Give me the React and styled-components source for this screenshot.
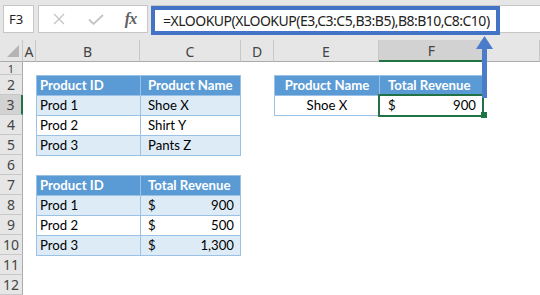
import React from 'react';
import styled, { createGlobalStyle } from 'styled-components';

const Global = createGlobalStyle`
  html, body { margin: 0; padding: 0; background: #fff; }
  body { width: 540px; height: 295px; overflow: hidden; font-family: Lato, "Liberation Sans", sans-serif; }
  * { box-sizing: border-box; }
`;

const Page = styled.div`
  position: relative;
  width: 540px;
  height: 295px;
  overflow: hidden;
  background: #fff;
`;

const TopBar = styled.div`
  height: 40px;
  background: #e6e6e6;
  display: flex;
  align-items: flex-start;
  padding: 5px 0 0 3px;
`;

const NameBox = styled.div`
  width: 31px;
  height: 28px;
  background: #fff;
  border: 1px solid #c6c6c6;
  font: 13px "Noto Sans", sans-serif;
  color: #222;
  display: flex;
  align-items: center;
  padding-left: 5px;
`;

const IconBox = styled.div`
  margin-left: 4px;
  width: 110px;
  height: 28px;
  background: #fff;
  border: 1px solid #c6c6c6;
  display: flex;
  align-items: center;
`;

const IconSlot = styled.div`
  width: ${(p) => p.$w}px;
  height: 100%;
  display: flex;
  align-items: center;
  justify-content: center;
`;

const Fx = styled.span`
  font: italic bold 16px "Liberation Serif", serif;
  color: #606060;
  letter-spacing: -1px;
`;

const FormulaField = styled.div`
  margin-left: 3px;
  flex: 1;
  height: 28px;
  background: #fff;
  border-top: 1px solid #c6c6c6;
  border-bottom: 1px solid #c6c6c6;
`;

const FormulaHighlight = styled.div`
  width: 349px;
  height: 29px;
  border: 4px solid #4472c4;
  display: flex;
  align-items: center;
  padding-left: 8px;
  font: 14px "Noto Sans", sans-serif;
  letter-spacing: -0.5px;
  color: #222;
  white-space: nowrap;
`;

const Sheet = styled.div`
  display: grid;
  grid-template-columns: 23px 13px 104px 101px 33px 105px 106px 1fr;
  grid-template-rows: 22px 13px repeat(11, 20px);
`;

const Corner = styled.div`
  background: #e6e6e6;
  border-right: 1px solid #c8c8c8;
  border-bottom: 1px solid #ababab;
  display: flex;
  align-items: flex-end;
  justify-content: flex-end;
  padding: 0 3px 4px 0;
`;

const ColHead = styled.div`
  background: ${(p) => (p.$active ? '#d2d2d2' : '#e6e6e6')};
  border-right: 1px solid #c8c8c8;
  border-bottom: ${(p) => (p.$active ? '2px solid #217346' : '1px solid #ababab')};
  display: flex;
  align-items: center;
  justify-content: center;
  font: 14px "Noto Sans", sans-serif;
  color: #444;
  padding-top: 1px;
`;

const RowHead = styled.div`
  grid-column: 1;
  grid-row: ${(p) => p.$row};
  background: ${(p) => (p.$active ? '#d2d2d2' : '#e6e6e6')};
  border-right: ${(p) => (p.$active ? '2px solid #217346' : '1px solid #ababab')};
  border-bottom: 1px solid #c8c8c8;
  display: flex;
  align-items: center;
  justify-content: center;
  font-family: "Noto Sans", sans-serif;
  font-size: ${(p) => (p.$short ? '11px' : '14px')};
  line-height: ${(p) => (p.$short ? '11px' : '18px')};
  color: #444;
`;

const Table = styled.div`
  grid-column: ${(p) => p.$col};
  grid-row: ${(p) => p.$row};
  align-self: start;
  justify-self: start;
  display: grid;
  grid-template-columns: ${(p) => p.$cols};
  grid-auto-rows: 19px;
  gap: 1px;
  padding: 1px;
  background: #9bc2e6;
  position: relative;
  z-index: 1;
`;

const bg = { head: '#5b9bd5', band: '#ddebf7', plain: '#ffffff' };

const Cell = styled.div`
  position: relative;
  background: ${(p) => bg[p.$v]};
  color: ${(p) => (p.$v === 'head' ? '#fff' : '#000')};
  font-weight: ${(p) => (p.$v === 'head' ? 700 : 400)};
  font-size: 13.2px;
  line-height: 19px;
  white-space: nowrap;
  display: flex;
  align-items: center;
  justify-content: ${(p) => p.$justify || 'flex-start'};
  padding: 0 ${(p) => p.$pr ?? 0}px 0 ${(p) => p.$pl ?? 0}px;
`;

const Selection = styled.div`
  position: absolute;
  inset: -2px;
  border: 2px solid #217346;
  pointer-events: none;
`;

const FillHandle = styled.div`
  position: absolute;
  right: -5px;
  bottom: -3px;
  width: 6px;
  height: 6px;
  background: #217346;
`;

const Arrow = styled.svg`
  position: absolute;
  left: 474px;
  top: 35px;
  z-index: 3;
`;

const cols = ['A', 'B', 'C', 'D', 'E', 'F', ''];
const rows = Array.from({ length: 12 }, (_, i) => i + 1);

const Money = ({ v, amount, pl = 7, pr = 6, children }) => (
  <Cell $v={v} $justify="space-between" $pl={pl} $pr={pr}>
    <span>$</span>
    <span>{amount}</span>
    {children}
  </Cell>
);

export default function App() {
  return (
    <Page>
      <Global />
      <TopBar>
        <NameBox>F3</NameBox>
        <IconBox>
          <IconSlot $w={39}>
            <svg width="12" height="12" viewBox="0 0 12 12">
              <path d="M1 1 L11 11 M11 1 L1 11" stroke="#c4c4c4" strokeWidth="1.3" fill="none" />
            </svg>
          </IconSlot>
          <IconSlot $w={36}>
            <svg width="16" height="11" viewBox="0 0 16 11">
              <path d="M1 5.5 L5.5 10 L15 1" stroke="#c4c4c4" strokeWidth="1.8" fill="none" />
            </svg>
          </IconSlot>
          <IconSlot $w={33}>
            <Fx>fx</Fx>
          </IconSlot>
        </IconBox>
        <FormulaField>
          <FormulaHighlight>=XLOOKUP(XLOOKUP(E3,C3:C5,B3:B5),B8:B10,C8:C10)</FormulaHighlight>
        </FormulaField>
      </TopBar>

      <Sheet>
        <Corner>
          <svg width="12" height="12" viewBox="0 0 12 12">
            <polygon points="12,0 12,12 0,12" fill="#b4b4b4" />
          </svg>
        </Corner>
        {cols.map((c, i) => (
          <ColHead key={i} $active={c === 'F'}>{c}</ColHead>
        ))}
        {rows.map((r) => (
          <RowHead key={r} $row={r + 1} $active={r === 3} $short={r === 1}>{r}</RowHead>
        ))}

        <Table $col="3 / 5" $row="3 / 7" $cols="103px 99px">
          <Cell $v="head" $pl={3}>Product ID</Cell>
          <Cell $v="head" $pl={7}>Product Name</Cell>
          <Cell $v="band" $pl={3}>Prod 1</Cell>
          <Cell $v="band" $pl={7}>Shoe X</Cell>
          <Cell $v="plain" $pl={3}>Prod 2</Cell>
          <Cell $v="plain" $pl={7}>Shirt Y</Cell>
          <Cell $v="band" $pl={3}>Prod 3</Cell>
          <Cell $v="band" $pl={7}>Pants Z</Cell>
        </Table>

        <Table $col="3 / 5" $row="8 / 12" $cols="103px 99px">
          <Cell $v="head" $pl={3}>Product ID</Cell>
          <Cell $v="head" $pl={7}>Total Revenue</Cell>
          <Cell $v="band" $pl={3}>Prod 1</Cell>
          <Money v="band" amount="900" />
          <Cell $v="plain" $pl={3}>Prod 2</Cell>
          <Money v="plain" amount="500" />
          <Cell $v="band" $pl={3}>Prod 3</Cell>
          <Money v="band" amount="1,300" />
        </Table>

        <Table $col="6 / 8" $row="3 / 5" $cols="104px 102px">
          <Cell $v="head" $justify="center">Product Name</Cell>
          <Cell $v="head" $pl={8}>Total Revenue</Cell>
          <Cell $v="plain" $justify="center">Shoe X</Cell>
          <Money v="plain" amount="900" pl={8} pr={6}>
            <Selection />
            <FillHandle />
          </Money>
        </Table>
      </Sheet>

      <Arrow width="22" height="66" viewBox="0 0 22 66">
        <rect x="8" y="12" width="5" height="51" fill="#4a7cc9" />
        <polygon points="10.5,1 2,14 19,14" fill="#4a7cc9" />
      </Arrow>
    </Page>
  );
}
